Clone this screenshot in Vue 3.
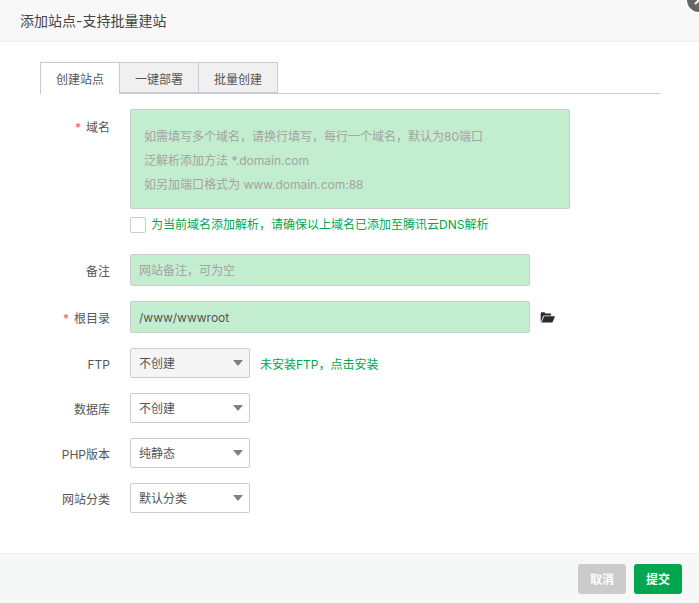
<script setup>
const tabs = ['创建站点', '一键部署', '批量创建']
const selects = [
  { label: '数据库', value: '不创建' },
  { label: 'PHP版本', value: '纯静态' },
  { label: '网站分类', value: '默认分类' }
]
</script>

<template>
  <div class="layer">
    <header class="title">添加站点-支持批量建站</header>
    <span class="close">
      <svg viewBox="0 0 12 12" width="12" height="12" fill="none" stroke="#fff" stroke-width="2"><path d="M2 2l8 8M10 2l-8 8" /></svg>
    </span>

    <main class="content">
      <div class="tabs">
        <div v-for="(tab, i) in tabs" :key="tab" class="tab" :class="{ active: i === 0 }">{{ tab }}</div>
      </div>

      <div class="row domain-row">
        <label class="label"><i>*</i>域名</label>
        <div class="textarea">
          <p>如需填写多个域名，请换行填写，每行一个域名，默认为80端口</p>
          <p>泛解析添加方法 *.domain.com</p>
          <p>如另加端口格式为 www.domain.com:88</p>
        </div>
      </div>
      <div class="check-row">
        <span class="checkbox"></span>
        <span class="green">为当前域名添加解析，请确保以上域名已添加至腾讯云DNS解析</span>
      </div>

      <div class="row note-row">
        <label class="label">备注</label>
        <div class="input placeholder">网站备注，可为空</div>
      </div>
      <div class="row path-row">
        <label class="label"><i>*</i>根目录</label>
        <div class="input">/www/wwwroot</div>
        <svg class="folder" viewBox="0 0 16 12" width="15" height="11">
          <path fill="#2b2b2b" d="M.6 11.4V1.4C.6.8 1 .4 1.6.4h3.2l1 1.3h5.2c.6 0 1 .4 1 1v1.2H4.4c-.6 0-1 .3-1.2.8z" />
          <path fill="#2b2b2b" d="M4.3 4.7h11.2c.4 0 .6.3.5.6l-2.4 5.6c-.1.3-.4.5-.7.5H1.4z" />
        </svg>
      </div>
      <div class="row select-row">
        <label class="label">FTP</label>
        <div class="select disabled">不创建<span class="caret"></span></div>
        <span class="green install">未安装FTP，点击安装</span>
      </div>
      <div v-for="item in selects" :key="item.label" class="row select-row">
        <label class="label">{{ item.label }}</label>
        <div class="select">{{ item.value }}<span class="caret"></span></div>
      </div>
    </main>

    <footer class="footer">
      <button class="btn cancel">取消</button>
      <button class="btn submit">提交</button>
    </footer>
  </div>
</template>

<style>
html, body {
  margin: 0;
  background: #fff;
}
</style>

<style scoped>
.layer {
  position: relative;
  width: 699px;
  height: 603px;
  display: flex;
  flex-direction: column;
  overflow: hidden;
  font-family: "Inter", "Noto Sans CJK SC", sans-serif;
  font-size: 12px;
  color: #555;
}

.title {
  height: 41px;
  line-height: 41px;
  padding-left: 20px;
  font-size: 14px;
  color: #444;
  background: #f8f8f8;
  border-bottom: 1px solid #eee;
  flex: none;
}

.close {
  position: absolute;
  top: -14px;
  right: -14px;
  width: 28px;
  height: 28px;
  box-sizing: border-box;
  display: flex;
  align-items: center;
  justify-content: center;
  border-radius: 50%;
  background: #666;
  border: 2px solid #fff;
}

.content {
  flex: 1;
  padding: 20px 39px 0 40px;
}

.tabs {
  display: flex;
  height: 31px;
  border-bottom: 1px solid #ccc8d4;
}

.tab {
  width: 79px;
  height: 31px;
  line-height: 31px;
  box-sizing: border-box;
  padding-top: 1px;
  text-align: center;
  background: #f0f0f0;
  color: #555;
  border: 1px solid #ccc8d4;
  border-left: 0;
}

.tab.active {
  width: 80px;
  height: 32px;
  background: #fff;
  border-left: 1px solid #ccc8d4;
  border-bottom: 0;
}

.row {
  display: flex;
  align-items: flex-start;
}

.label {
  width: 70px;
  height: 32px;
  box-sizing: border-box;
  padding-top: 2px;
  margin-right: 20px;
  flex: none;
  text-align: right;
  line-height: 32px;
  color: #555;
}

.label i {
  color: #f55;
  font-style: normal;
  margin-right: 5px;
}

.domain-row {
  margin-top: 15px;
}

.domain-row .label {
  padding-top: 3px;
}

.textarea {
  width: 440px;
  height: 100px;
  box-sizing: border-box;
  padding: 15px 13px 0;
  background: #c3edcf;
  border: 1px solid #ccc;
  border-radius: 2px;
  color: #a3a3a3;
}

.textarea p {
  margin: 0;
  line-height: 24px;
}

.check-row {
  display: flex;
  align-items: center;
  margin: 8px 0 0 90px;
  height: 16px;
  line-height: 15px;
}

.checkbox {
  width: 16px;
  height: 16px;
  box-sizing: border-box;
  margin-right: 5px;
  background: #fff;
  border: 1px solid #ccc;
  border-radius: 2px;
}

.check-row .green {
  margin-top: -1px;
}

.green {
  color: #00a74a;
}

.note-row {
  margin-top: 21px;
}

.path-row {
  margin-top: 15px;
  align-items: center;
}

.input {
  width: 400px;
  height: 32px;
  line-height: 32px;
  box-sizing: border-box;
  padding-left: 8px;
  background: #c3edcf;
  border: 1px solid #ccc;
  border-radius: 2px;
  color: #555;
}

.input.placeholder {
  color: #a3a3a3;
}

.folder {
  margin-left: 10px;
}

.select-row {
  margin-top: 15px;
  align-items: center;
  height: 30px;
}

.select-row .label {
  height: 30px;
  line-height: 30px;
}

.select {
  position: relative;
  width: 120px;
  height: 30px;
  line-height: 30px;
  box-sizing: border-box;
  padding-left: 8px;
  border: 1px solid #ccc;
  border-radius: 2px;
  background: #fff;
  color: #555;
}

.select.disabled {
  background: #f5f5f5;
}

.caret {
  position: absolute;
  right: 6px;
  top: 11px;
  border: 5px solid transparent;
  border-width: 6px 5.5px 0;
  border-top-color: #808080;
}

.install {
  margin-left: 10px;
}

.footer {
  height: 49px;
  flex: none;
  display: flex;
  justify-content: flex-end;
  align-items: center;
  gap: 8px;
  padding-right: 17px;
  background: #f6f8f8;
  border-top: 1px solid #eee;
}

.btn {
  width: 48px;
  height: 30px;
  padding: 0;
  border: 0;
  border-radius: 3px;
  color: #fff;
  font: inherit;
  font-weight: 600;
}

.cancel {
  background: #cbcbcb;
}

.submit {
  background: #00a650;
}
</style>
